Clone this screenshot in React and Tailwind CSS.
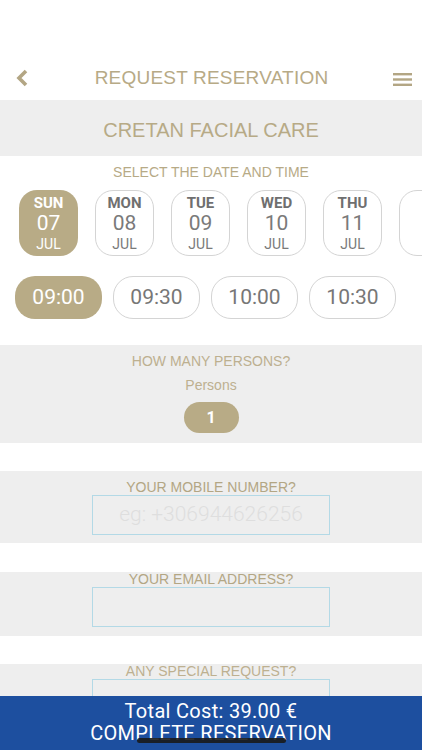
import React from "react";

const GOLD = "text-[#b7aa86]";
const ARIAL = { fontFamily: "'Liberation Sans', Arial, sans-serif" };

function DateCard({ day, num, month, active, empty }) {
  return (
    <div
      className={
        "flex h-[66px] w-[59px] shrink-0 flex-col items-center justify-center rounded-[18px] " +
        (active
          ? "bg-[#b8ab86] text-white"
          : "border border-[#d4d4d4] bg-white text-[#7a7a7a]")
      }
    >
      {!empty && (
        <>
          <div className={"text-[15px] font-bold leading-[18px] " + (active ? "" : "text-[#6f6f6f]")}>{day}</div>
          <div className="text-[21px] leading-[23px]">{num}</div>
          <div className="text-[14px] leading-[18px]">{month}</div>
        </>
      )}
    </div>
  );
}

function TimeSlot({ t, active }) {
  return (
    <div
      className={
        "flex h-[43px] w-[87px] shrink-0 items-center justify-center rounded-[20px] text-[21px] " +
        (active ? "bg-[#b8ab86] text-white" : "border border-[#d4d4d4] bg-white text-[#777777]")
      }
    >
      {t}
    </div>
  );
}

export default function App() {
  return (
    <div
      className="relative flex h-[750px] w-[422px] flex-col overflow-hidden bg-white"
      style={{ fontFamily: "Roboto, 'Liberation Sans', Arial, sans-serif" }}
    >
      <div className="flex-1 overflow-hidden">
        <div className="h-[56px]" />
        {/* Header */}
        <div className="flex h-[44px] items-center justify-between pl-[14px] pr-[10px]">
          <svg width="16" height="20" viewBox="0 0 16 20">
            <path d="M12 3 L5 10 L12 17" fill="none" stroke="#b3a684" strokeWidth="3.6" strokeLinecap="butt" strokeLinejoin="miter" />
          </svg>
          <div className={"text-[19px] tracking-[0.2px] " + GOLD} style={ARIAL}>
            REQUEST RESERVATION
          </div>
          <svg width="19" height="14" viewBox="0 0 19 14" className="mt-[4px]">
            <rect x="0" y="0" width="19" height="2.4" fill="#b3a684" />
            <rect x="0" y="5.3" width="19" height="2.4" fill="#b3a684" />
            <rect x="0" y="10.6" width="19" height="2.4" fill="#b3a684" />
          </svg>
        </div>

        {/* Service band */}
        <div
          className={"flex h-[56px] items-center justify-center bg-[#eeeeee] pt-[4px] text-[20px] " + GOLD}
          style={ARIAL}
        >
          CRETAN FACIAL CARE
        </div>

        <div className={"pt-[8px] text-center text-[14px] leading-[16px] " + GOLD} style={ARIAL}>
          SELECT THE DATE AND TIME
        </div>

        {/* Dates */}
        <div className="mt-[10px] flex gap-[17px] pl-[19px]">
          <DateCard day="SUN" num="07" month="JUL" active />
          <DateCard day="MON" num="08" month="JUL" />
          <DateCard day="TUE" num="09" month="JUL" />
          <DateCard day="WED" num="10" month="JUL" />
          <DateCard day="THU" num="11" month="JUL" />
          <DateCard empty />
        </div>

        {/* Times */}
        <div className="mt-[20px] flex gap-[11px] pl-[15px]">
          <TimeSlot t="09:00" active />
          <TimeSlot t="09:30" />
          <TimeSlot t="10:00" />
          <TimeSlot t="10:30" />
        </div>

        {/* Persons */}
        <div className="mt-[26px] flex flex-col items-center bg-[#eeeeee] pb-[10px] pt-[8px]" style={ARIAL}>
          <div className="text-[14px] leading-[16px] text-[#bdb090]">HOW MANY PERSONS?</div>
          <div className="mt-[8px] text-[14px] leading-[16px] text-[#bdb090]">Persons</div>
          <div
            className="mt-[9px] flex h-[31px] w-[55px] items-center justify-center rounded-full bg-[#b8ab86] text-[16px] font-bold text-white"
            style={{ fontFamily: "Roboto, sans-serif" }}
          >
            1
          </div>
        </div>

        <div className="h-[28px]" />

        {/* Mobile */}
        <div className="flex flex-col items-center bg-[#eeeeee] pb-[8px] pt-[8px]">
          <div className="text-[14px] leading-[16px] text-[#b3a684]" style={ARIAL}>
            YOUR MOBILE NUMBER?
          </div>
          <div className="flex h-[40px] w-[238px] items-center justify-center border border-[#b3d9e6] text-[21px] font-light text-[#dedede]">
            eg: +306944626256
          </div>
        </div>

        <div className="h-[29px]" />

        {/* Email */}
        <div className="flex flex-col items-center bg-[#eeeeee] pb-[9px] pt-[0px]">
          <div className="text-[14px] leading-[15px] text-[#b3a684]" style={ARIAL}>
            YOUR EMAIL ADDRESS?
          </div>
          <div className="h-[40px] w-[238px] border border-[#b3d9e6]" />
        </div>

        <div className="h-[28px]" />

        {/* Special request */}
        <div className="flex flex-col items-center bg-[#eeeeee] pt-[0px]">
          <div className="text-[14px] leading-[15px] text-[#bdb090]" style={ARIAL}>
            ANY SPECIAL REQUEST?
          </div>
          <div className="h-[60px] w-[238px] border border-[#b3d9e6]" />
        </div>
      </div>

      {/* Bottom bar */}
      <div className="flex h-[54px] shrink-0 flex-col items-center justify-center bg-[#1d4f9f] pb-[2px] text-white">
        <div className="text-[20px] leading-[22px] tracking-[0.3px]">Total Cost: 39.00 €</div>
        <div className="text-[20px] leading-[22px] tracking-[0.3px]">COMPLETE RESERVATION</div>
      </div>

      <div className="absolute bottom-[7px] left-[137px] h-[5px] w-[149px] rounded-full bg-[#1a1a1a]/90" />
    </div>
  );
}
